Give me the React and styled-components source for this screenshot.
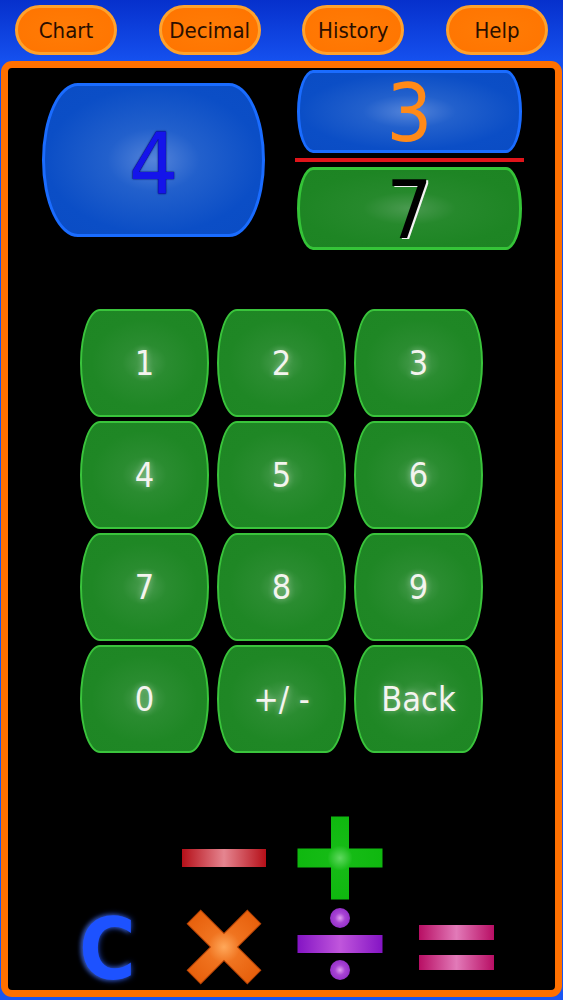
import React from "react";
import styled, { createGlobalStyle } from "styled-components";

const Global = createGlobalStyle`
  html, body { margin: 0; padding: 0; background: #1a55f0; }
  * { box-sizing: border-box; }
`;

const FONT = `"DejaVu Sans Condensed", "DejaVu Sans", sans-serif`;

const Page = styled.div`
  width: 563px;
  height: 1000px;
  display: flex;
  flex-direction: column;
  background: linear-gradient(180deg, #0630cc 0%, #1550ee 6%, #1a56f2 100%);
  font-family: ${FONT};
`;

const TopBar = styled.nav`
  height: 61px;
  flex: none;
  display: flex;
  justify-content: space-between;
  align-items: flex-start;
  padding: 5px 15px 0;
`;

const NavButton = styled.button`
  width: 102px;
  height: 50px;
  border-radius: 25px;
  border: 3px solid #ffa22c;
  background: radial-gradient(ellipse at center, #ff7c06 0%, #ff7400 100%);
  color: #2a0e00;
  font-family: ${FONT};
  font-size: 22px;
  padding: 0;
  cursor: pointer;
`;

const Panel = styled.main`
  flex: 1;
  margin: 0 1px 3px;
  border: 7px solid #ff7000;
  border-radius: 11px;
  background: #000;
  display: flex;
  flex-direction: column;
  padding-top: 2px;
`;

const DisplayRow = styled.section`
  display: flex;
  align-items: center;
  gap: 30px;
  padding-left: 34px;
`;

const Barrel = styled.div`
  width: ${(p) => p.$w}px;
  height: ${(p) => p.$h}px;
  border-radius: ${(p) => p.$rx}px / 50%;
  display: flex;
  align-items: center;
  justify-content: center;
  font-family: ${FONT};
  border: 3px solid ${(p) => (p.$tone === "blue" ? "#1a6cff" : "#35c438")};
  background: ${(p) =>
    p.$tone === "blue"
      ? "radial-gradient(ellipse at center, #5585da 0%, #2260cc 30%, #0b4ec6 70%, #0a4cc4 100%)"
      : "radial-gradient(ellipse at center, #4a9a50 0%, #26892c 30%, #1e8524 70%, #1d8423 100%)"};
`;

const BigDigit = styled.span`
  font-size: ${(p) => p.$size}px;
  line-height: 1;
  color: ${(p) => p.$color};
  text-shadow: ${(p) => p.$shadow};
  transform: translateY(${(p) => p.$dy || 0}px);
`;

const FractionCol = styled.div`
  width: 229px;
  display: flex;
  flex-direction: column;
  align-items: center;
  gap: 5px;
`;

const FractionBar = styled.div`
  width: 229px;
  height: 4px;
  background: #e0141a;
`;

const Keypad = styled.section`
  margin-top: 59px;
  display: grid;
  grid-template-columns: repeat(3, 129px);
  grid-auto-rows: 108px;
  column-gap: 8px;
  row-gap: 4px;
  justify-content: center;
`;

const Key = styled.button`
  border-radius: 20px / 50%;
  border: 2.5px solid #3ac43c;
  background: radial-gradient(ellipse at center, #4a9d50 0%, #2a8c30 25%, #1f8725 60%, #1e8624 100%);
  color: #f4f4ef;
  font-family: ${FONT};
  font-size: 34px;
  padding: 0;
  text-shadow: 0 0 6px rgba(255, 255, 255, 0.45);
  cursor: pointer;
`;

const Operators = styled.section`
  margin-top: 62px;
  display: grid;
  grid-template-columns: repeat(4, 116px);
  grid-auto-rows: 86px;
  row-gap: 2px;
  justify-content: center;
`;

const OpCell = styled.button`
  grid-column: ${(p) => p.$col || "auto"};
  background: none;
  border: none;
  padding: 0;
  display: flex;
  align-items: center;
  justify-content: center;
  cursor: pointer;
`;

const ClearGlyph = styled.span`
  font-family: ${FONT};
  font-weight: bold;
  font-size: 86px;
  line-height: 1;
  color: #1d52ff;
  text-shadow: 0 0 6px rgba(40, 90, 255, 0.8), -2px 0 4px rgba(120, 160, 255, 0.5);
  transform: translateY(3px);
`;

const Minus = () => (
  <svg width="90" height="86" viewBox="0 0 90 86">
    <defs>
      <linearGradient id="mg" x1="0" x2="1" y1="0" y2="0">
        <stop offset="0" stopColor="#b50f18" />
        <stop offset="0.5" stopColor="#e58590" />
        <stop offset="1" stopColor="#b50f18" />
      </linearGradient>
    </defs>
    <rect x="3" y="34" width="84" height="18" fill="url(#mg)" />
  </svg>
);

const Plus = () => (
  <svg width="90" height="86" viewBox="0 0 90 86">
    <defs>
      <radialGradient id="pg" gradientUnits="userSpaceOnUse" cx="45" cy="43" r="42">
        <stop offset="0" stopColor="#5fd85f" />
        <stop offset="0.3" stopColor="#15bb15" />
        <stop offset="1" stopColor="#0fb80f" />
      </radialGradient>
    </defs>
    <path
      d="M36 1.5 H54 V33.5 H87.5 V52.5 H54 V84.5 H36 V52.5 H2.5 V33.5 H36 Z"
      fill="url(#pg)"
    />
  </svg>
);

const Times = () => (
  <svg width="90" height="86" viewBox="0 0 90 86">
    <defs>
      <radialGradient id="tg" gradientUnits="userSpaceOnUse" cx="0" cy="0" r="40">
        <stop offset="0" stopColor="#ffa85a" />
        <stop offset="0.4" stopColor="#f07420" />
        <stop offset="1" stopColor="#e8620e" />
      </radialGradient>
    </defs>
    <g transform="translate(45 44)">
      <g fill="#b84406" stroke="#b84406" strokeWidth="2">
        <rect x="-42" y="-9" width="84" height="18" transform="rotate(45)" />
        <rect x="-42" y="-9" width="84" height="18" transform="rotate(-45)" />
      </g>
      <g fill="url(#tg)">
        <rect x="-42" y="-9" width="84" height="18" transform="rotate(45)" />
        <rect x="-42" y="-9" width="84" height="18" transform="rotate(-45)" />
      </g>
    </g>
  </svg>
);

const Divide = () => (
  <svg width="90" height="86" viewBox="0 0 90 86">
    <defs>
      <linearGradient id="dg" x1="0" x2="1" y1="0" y2="0">
        <stop offset="0" stopColor="#8414c4" />
        <stop offset="0.5" stopColor="#c056dc" />
        <stop offset="1" stopColor="#8414c4" />
      </linearGradient>
      <radialGradient id="dd" cx="0.5" cy="0.5" r="0.5">
        <stop offset="0" stopColor="#e0a0ee" />
        <stop offset="0.5" stopColor="#a844d4" />
        <stop offset="1" stopColor="#9430c8" />
      </radialGradient>
    </defs>
    <circle cx="45" cy="15" r="10" fill="url(#dd)" />
    <rect x="2.5" y="32" width="85" height="18" fill="url(#dg)" />
    <circle cx="45" cy="67" r="10" fill="url(#dd)" />
  </svg>
);

const Equals = () => (
  <svg width="90" height="86" viewBox="0 0 90 86">
    <defs>
      <linearGradient id="eg" x1="0" x2="1" y1="0" y2="0">
        <stop offset="0" stopColor="#b80e64" />
        <stop offset="0.5" stopColor="#e27ab8" />
        <stop offset="1" stopColor="#b80e64" />
      </linearGradient>
    </defs>
    <rect x="8" y="22" width="75" height="15" fill="url(#eg)" />
    <rect x="8" y="52" width="75" height="15" fill="url(#eg)" />
  </svg>
);

const keys = ["1", "2", "3", "4", "5", "6", "7", "8", "9", "0", "+/ -", "Back"];

export default function App() {
  return (
    <>
      <Global />
      <Page>
        <TopBar>
          {["Chart", "Decimal", "History", "Help"].map((t) => (
            <NavButton key={t}>{t}</NavButton>
          ))}
        </TopBar>
        <Panel>
          <DisplayRow>
            <Barrel $tone="blue" $w={223} $h={154} $rx={36}>
              <BigDigit
                $size={86}
                $color="#1414ea"
                $shadow="0 0 2px #000a60, 0 0 1px #000a60"
                $dy={4}
              >
                4
              </BigDigit>
            </Barrel>
            <FractionCol>
              <Barrel $tone="blue" $w={225} $h={83} $rx={16}>
                <BigDigit $size={80} $color="#ff8a18" $shadow="none" $dy={2}>
                  3
                </BigDigit>
              </Barrel>
              <FractionBar />
              <Barrel $tone="green" $w={225} $h={83} $rx={16}>
                <BigDigit
                  $size={80}
                  $color="#000"
                  $shadow="2px 1px 0 #f4f4f4"
                  $dy={2}
                >
                  7
                </BigDigit>
              </Barrel>
            </FractionCol>
          </DisplayRow>
          <Keypad>
            {keys.map((k) => (
              <Key key={k}>{k}</Key>
            ))}
          </Keypad>
          <Operators>
            <OpCell $col={2} aria-label="minus">
              <Minus />
            </OpCell>
            <OpCell $col={3} aria-label="plus">
              <Plus />
            </OpCell>
            <OpCell $col={1} aria-label="clear">
              <ClearGlyph>C</ClearGlyph>
            </OpCell>
            <OpCell aria-label="times">
              <Times />
            </OpCell>
            <OpCell aria-label="divide">
              <Divide />
            </OpCell>
            <OpCell aria-label="equals">
              <Equals />
            </OpCell>
          </Operators>
        </Panel>
      </Page>
    </>
  );
}
